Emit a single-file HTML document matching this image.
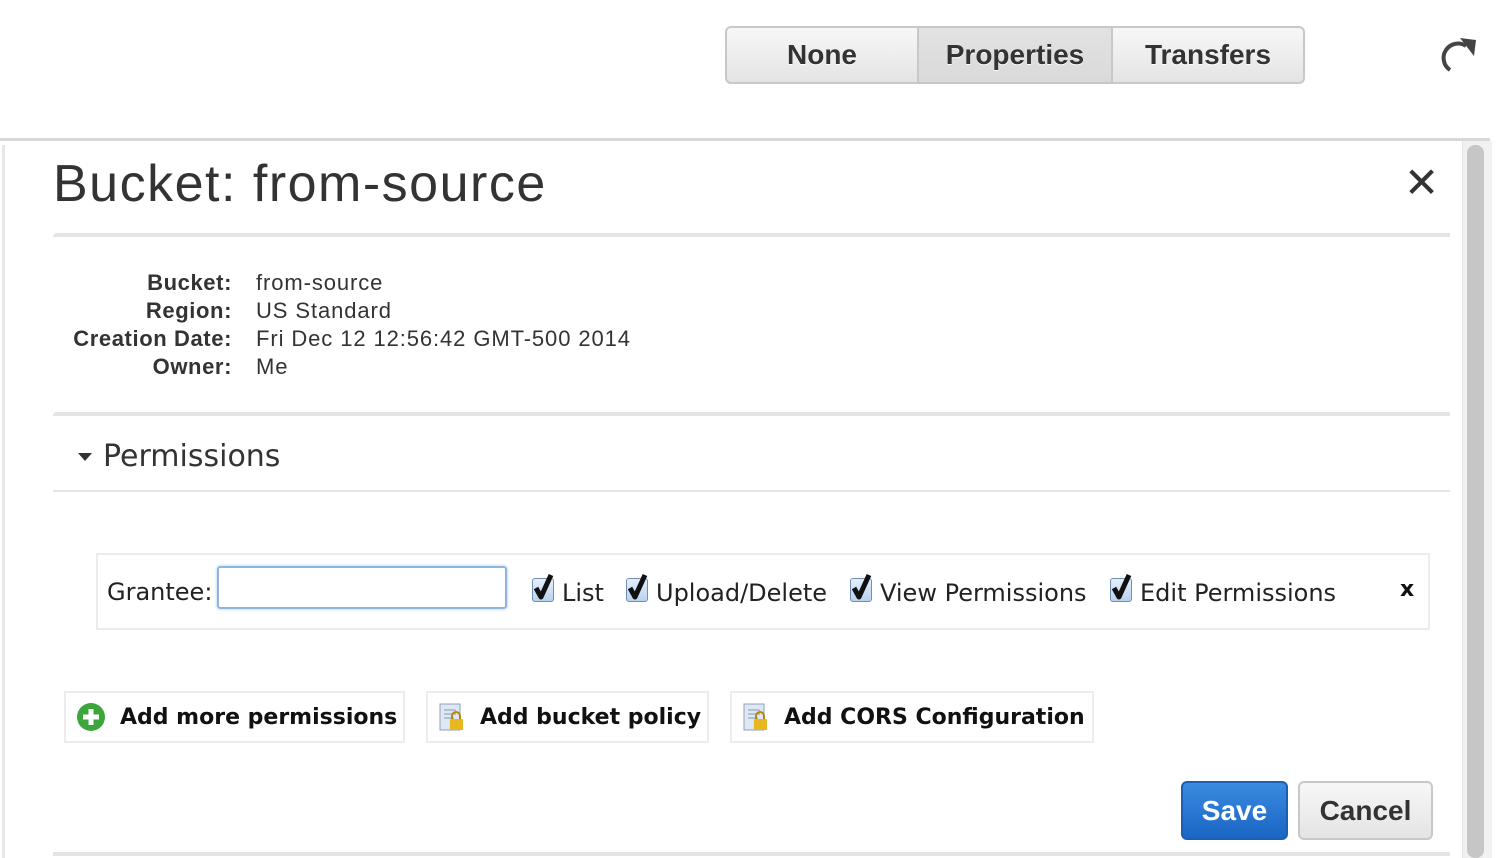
<!DOCTYPE html>
<html><head><style>
*{margin:0;padding:0;box-sizing:border-box}
body{width:1496px;height:858px;background:#fff;position:relative;overflow:hidden;font-family:"Liberation Sans",Arial,sans-serif;color:#333}
.a{position:absolute}
.seg{position:absolute;top:26px;height:58px;border:2px solid #c8c8c8;background:linear-gradient(#f7f7f7,#e4e4e4);font-weight:bold;font-size:28px;color:#333;display:flex;align-items:center;justify-content:center;text-shadow:0 1px 0 #fff}
.lbl{position:absolute;right:1264px;font-weight:bold;font-size:22px;text-align:right;letter-spacing:0.6px}
.val{position:absolute;left:256px;font-size:22px;letter-spacing:0.9px}
.dv{font-family:"DejaVu Sans",Verdana,sans-serif}
.cb{position:absolute;top:578px;width:22px;height:24px;border:1px solid #6f8fb7;border-radius:3px;background:linear-gradient(#e6f0fb,#b8d2ef)}
.cbt{position:absolute;top:578px;font-size:24px;line-height:28px;color:#222}
.btn{position:absolute;top:691px;height:52px;border:2px solid #ececec;background:#fff;font-weight:bold;font-size:22px;color:#111;display:flex;align-items:center}
</style></head><body>
<div class="seg" style="left:725px;width:194px;border-radius:6px 0 0 6px">None</div>
<div class="seg" style="left:917px;width:196px;background:linear-gradient(#e2e2e2,#dadada)">Properties</div>
<div class="seg" style="left:1111px;width:194px;border-radius:0 6px 6px 0">Transfers</div>
<svg class="a" style="left:1440px;top:36px" width="40" height="38" viewBox="0 0 40 38"><path d="M26 10 A14 14 0 1 0 10 34" fill="none" stroke="#444" stroke-width="4"/><path d="M20 2 L36 4 L34 20 Z" fill="#444"/></svg>
<div class="a" style="left:0;top:138px;width:1490px;height:3px;background:#d8d8d8"></div>
<div class="a" style="left:2px;top:145px;width:3px;height:713px;background:#e6e6e6"></div>
<div class="a" style="left:1462px;top:141px;width:30px;height:717px;background:#f1f1f1;border-left:1px solid #e2e2e2"></div>
<div class="a" style="left:1467px;top:145px;width:17px;height:713px;background:#c6c6c6;border-radius:8px"></div>
<div class="a" style="left:53px;top:152px;font-size:52px;color:#333;line-height:64px;letter-spacing:1.5px">Bucket: from-source</div>
<div class="a" style="left:1404px;top:160px;font-size:42px;color:#333;line-height:46px">✕</div>
<div class="a" style="left:53px;top:233px;width:1397px;height:4px;background:#e4e4e4;border-radius:4px 0 0 0"></div>
<div class="lbl" style="top:270px">Bucket:</div><div class="val" style="top:270px">from-source</div>
<div class="lbl" style="top:298px">Region:</div><div class="val" style="top:298px">US Standard</div>
<div class="lbl" style="top:326px">Creation Date:</div><div class="val" style="top:326px">Fri Dec 12 12:56:42 GMT-500 2014</div>
<div class="lbl" style="top:354px">Owner:</div><div class="val" style="top:354px">Me</div>
<div class="a" style="left:53px;top:412px;width:1397px;height:4px;background:#e4e4e4;border-radius:4px 0 0 0"></div>
<div class="a" style="left:78px;top:453px;width:0;height:0;border-left:7px solid transparent;border-right:7px solid transparent;border-top:8px solid #333"></div>
<div class="a dv" style="left:103px;top:439px;font-size:30px;color:#333">Permissions</div>
<div class="a" style="left:53px;top:490px;width:1397px;height:2px;background:#e6e6e6"></div>
<div class="a" style="left:96px;top:553px;width:1334px;height:77px;border:2px solid #ececec"></div>
<div class="a dv" style="left:107px;top:578px;font-size:24px;color:#222">Grantee:</div>
<div class="a" style="left:217px;top:566px;width:290px;height:43px;border:2px solid #8fb4e0;border-radius:3px;box-shadow:0 0 3px #a8c8ee"></div>
<div class="cb" style="left:532px"></div><div class="cbt dv" style="left:562px;top:579px">List</div>
<div class="cb" style="left:626px"></div><div class="cbt dv" style="left:656px;top:579px">Upload/Delete</div>
<div class="cb" style="left:850px"></div><div class="cbt dv" style="left:880px;top:579px">View Permissions</div>
<div class="cb" style="left:1110px"></div><div class="cbt dv" style="left:1140px;top:579px">Edit Permissions</div>
<svg class="a" style="left:530px;top:572px" width="620" height="32"><g fill="none" stroke="#111" stroke-width="5" stroke-linejoin="round"><path d="M6 16 L11 25 L21 3"/><path d="M100 16 L105 25 L115 3"/><path d="M324 16 L329 25 L339 3"/><path d="M584 16 L589 25 L599 3"/></g></svg>
<div class="a dv" style="left:1400px;top:577px;font-size:22px;color:#111;font-weight:bold">x</div>
<div class="btn dv" style="left:64px;width:341px"><svg style="margin:0 14px 0 10px" width="30" height="30"><circle cx="15" cy="15" r="14" fill="#3ca63c"/><path d="M15 7v16M7 15h16" stroke="#fff" stroke-width="5"/></svg>Add more permissions</div>
<div class="btn dv" style="left:426px;width:283px"><svg style="margin:0 14px 0 10px" width="28" height="30"><rect x="2" y="2" width="20" height="26" fill="#dfe7f2" stroke="#8aa0c0"/><path d="M6 8h12M6 12h12M6 16h10" stroke="#8a9ab0"/><rect x="12" y="17" width="13" height="11" fill="#e8b820"/><path d="M14 17v-3a4 4 0 0 1 8 0v3" fill="none" stroke="#b08a10" stroke-width="2"/></svg>Add bucket policy</div>
<div class="btn dv" style="left:730px;width:364px"><svg style="margin:0 14px 0 10px" width="28" height="30"><rect x="2" y="2" width="20" height="26" fill="#dfe7f2" stroke="#8aa0c0"/><path d="M6 8h12M6 12h12M6 16h10" stroke="#8a9ab0"/><rect x="12" y="17" width="13" height="11" fill="#e8b820"/><path d="M14 17v-3a4 4 0 0 1 8 0v3" fill="none" stroke="#b08a10" stroke-width="2"/></svg>Add CORS Configuration</div>
<div class="a" style="left:1181px;top:781px;width:107px;height:59px;border:2px solid #1b5fb0;border-radius:6px;background:linear-gradient(#3a8ae0,#1a66c4);color:#fff;font-weight:bold;font-size:28px;display:flex;align-items:center;justify-content:center">Save</div>
<div class="a" style="left:1298px;top:781px;width:135px;height:59px;border:2px solid #c8c8c8;border-radius:6px;background:linear-gradient(#f7f7f7,#e4e4e4);color:#333;font-weight:bold;font-size:28px;display:flex;align-items:center;justify-content:center">Cancel</div>
<div class="a" style="left:53px;top:852px;width:1397px;height:4px;background:#e4e4e4"></div>
</body></html>
